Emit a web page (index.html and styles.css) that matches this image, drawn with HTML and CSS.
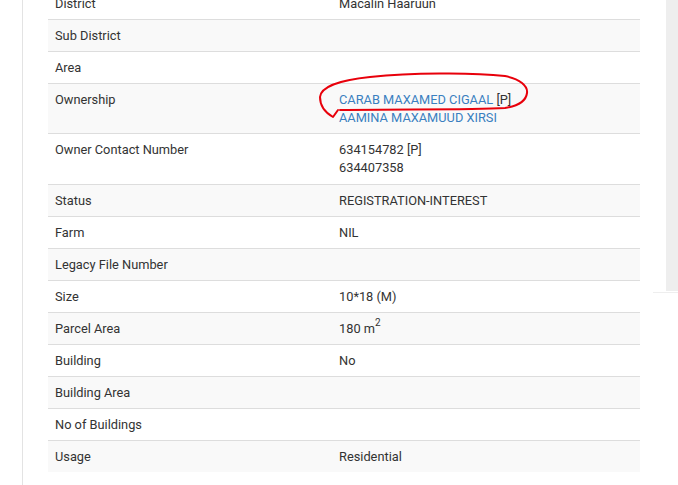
FILE: index.html
```html
<!DOCTYPE html>
<html>
<head>
<meta charset="utf-8">
<link rel="stylesheet" href="styles.css">
</head>
<body>
<div class="page">
  <div class="rail"></div>
  <div class="content">
    <table class="details">
      <tr><td class="label">District</td><td class="value">Macalin Haaruun</td></tr>
      <tr><td class="label">Sub District</td><td class="value"></td></tr>
      <tr><td class="label">Area</td><td class="value"></td></tr>
      <tr class="owners">
        <td class="label">Ownership</td>
        <td class="value">
          <div class="line"><a class="owner" href="#">CARAB MAXAMED CIGAAL</a> [P]</div>
          <div class="line"><a class="owner" href="#">AAMINA MAXAMUUD XIRSI</a></div>
        </td>
      </tr>
      <tr class="contacts">
        <td class="label">Owner Contact Number</td>
        <td class="value">
          <div class="line">634154782 [P]</div>
          <div class="line">634407358</div>
        </td>
      </tr>
      <tr><td class="label">Status</td><td class="value">REGISTRATION-INTEREST</td></tr>
      <tr><td class="label">Farm</td><td class="value">NIL</td></tr>
      <tr><td class="label">Legacy File Number</td><td class="value"></td></tr>
      <tr><td class="label">Size</td><td class="value">10*18 (M)</td></tr>
      <tr><td class="label">Parcel Area</td><td class="value">180 m<sup>2</sup></td></tr>
      <tr><td class="label">Building</td><td class="value">No</td></tr>
      <tr><td class="label">Building Area</td><td class="value"></td></tr>
      <tr><td class="label">No of Buildings</td><td class="value"></td></tr>
      <tr><td class="label">Usage</td><td class="value">Residential</td></tr>
    </table>
  </div>
  <div class="side-wrap">
    <div class="side"></div>
    <div class="side-foot"></div>
  </div>
</div>
<svg class="scribble" width="678" height="485" viewBox="0 0 678 485">
  <path d="M338,110 L333,117 C326,113 320,106 320,97 C321,87 340,80 370,77 C410,73 470,72 505,76 C520,79 528,86 527,93 C526,101 518,106 505,108 C470,110 400,109 340,110" fill="none" stroke="#e8000b" stroke-width="2" stroke-linecap="round" stroke-linejoin="round"/>
</svg>
</body>
</html>
```
FILE: styles.css
```css
html, body {
  margin: 0;
  padding: 0;
  background: #fff;
}
body {
  width: 678px;
  height: 485px;
  overflow: hidden;
  position: relative;
  font-family: Roboto, "Liberation Sans", sans-serif;
  font-size: 12.8px;
  line-height: 18px;
  color: #333;
}
.page {
  display: flex;
  align-items: flex-start;
  height: 485px;
}
.rail {
  width: 22px;
  height: 485px;
  border-right: 1px solid #e3e3e3;
  flex: none;
}
.content {
  flex: none;
  width: 592px;
  padding-left: 25px;
}
.details {
  width: 592px;
  border-collapse: collapse;
  margin-top: -13px;
}
.details td {
  border-top: 1px solid #ddd;
  padding: 7px 7px 6px 7px;
  vertical-align: top;
}
.details tr:first-child td {
  border-top: none;
  padding-top: 8px;
}
.details tr:nth-child(even) td {
  background: #f9f9f9;
}
.details .label {
  width: 270px;
}
.contacts td {
  padding-bottom: 7px;
}
.owner {
  color: #3a7fc0;
  text-decoration: none;
}
sup {
  font-size: 10px;
  line-height: 0;
  vertical-align: 7px;
}
.side-wrap {
  flex: none;
  margin-left: 13px;
  width: 25px;
}
.side {
  margin-left: 13px;
  width: 12px;
  height: 291px;
  background: #eee;
}
.side-foot {
  margin-top: 1px;
  height: 1px;
  background: #eee;
}
.scribble {
  position: absolute;
  left: 0;
  top: 0;
  pointer-events: none;
}
```
